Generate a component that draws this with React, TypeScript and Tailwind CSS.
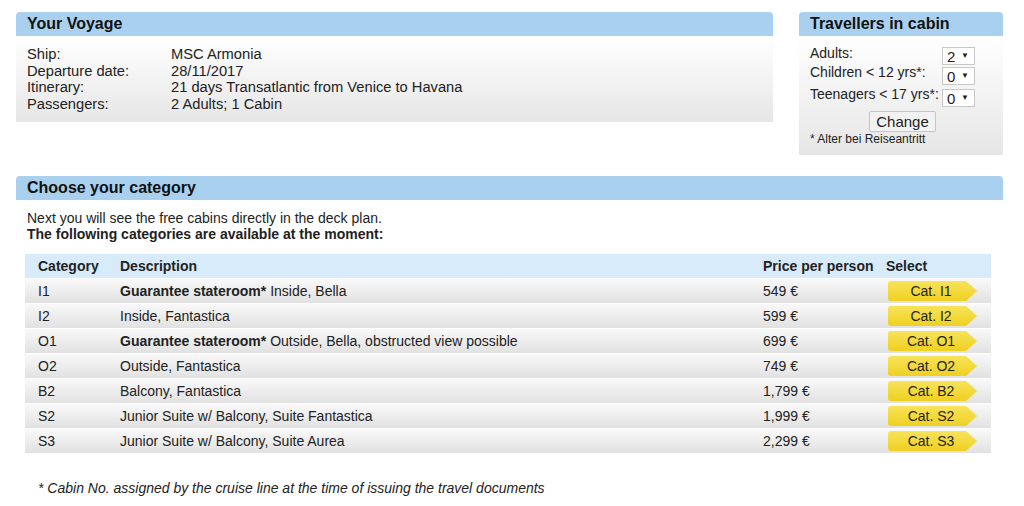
import React from 'react';

const font = "font-['Liberation_Sans',Arial,sans-serif]";

const rows = [
  { cat: 'I1', bold: true, desc: 'Inside, Bella', price: '549 €' },
  { cat: 'I2', bold: false, desc: 'Inside, Fantastica', price: '599 €' },
  { cat: 'O1', bold: true, desc: 'Outside, Bella, obstructed view possible', price: '699 €' },
  { cat: 'O2', bold: false, desc: 'Outside, Fantastica', price: '749 €' },
  { cat: 'B2', bold: false, desc: 'Balcony, Fantastica', price: '1,799 €' },
  { cat: 'S2', bold: false, desc: 'Junior Suite w/ Balcony, Suite Fantastica', price: '1,999 €' },
  { cat: 'S3', bold: false, desc: 'Junior Suite w/ Balcony, Suite Aurea', price: '2,299 €' },
];

function BoxHeader({ title }: { title: string }) {
  return (
    <div className="h-6 bg-[#a9d1ef] rounded-t-[4px] px-[11px] flex items-center">
      <h2 className="text-[16px] font-bold text-[#111] leading-none">{title}</h2>
    </div>
  );
}

function Select({ value }: { value: string }) {
  return (
    <div className="w-[33px] h-[18px] bg-white border border-[#c8c8c8] flex items-center justify-between pl-[4px] pr-[5px] text-[15px] leading-none text-[#222]">
      <span>{value}</span>
      <span className="text-[8px]">▼</span>
    </div>
  );
}

function CatButton({ label }: { label: string }) {
  return (
    <div className="relative w-[89px] h-[20px]">
      <svg className="absolute inset-0" width="89" height="20" viewBox="0 0 89 20">
        <defs>
          <linearGradient id="yel" x1="0" y1="0" x2="0" y2="1">
            <stop offset="0" stopColor="#f7e35a" />
            <stop offset="1" stopColor="#efd021" />
          </linearGradient>
        </defs>
        <path d="M3 0 H78 L89 10 L78 20 H3 Q0 20 0 17 V3 Q0 0 3 0 Z" fill="url(#yel)" />
      </svg>
      <span className="relative flex h-full items-center justify-center pr-[3px] text-[14px] text-[#222] leading-none">
        {label}
      </span>
    </div>
  );
}

export default function App() {
  return (
    <div className={`${font} bg-white w-[1024px] h-[506px] text-[#222] pt-3 pl-4`}>
      {/* top row */}
      <div className="flex items-start gap-[26px]">
        <section className="w-[757px]">
          <BoxHeader title="Your Voyage" />
          <div className="h-[86px] bg-gradient-to-b from-white to-[#e6e6e6] pl-[11px] pt-[10px] text-[14.7px] leading-[16.5px]">
            <div className="grid grid-cols-[144px_1fr]">
              <span>Ship:</span>
              <span>MSC Armonia</span>
              <span>Departure date:</span>
              <span>28/11/2017</span>
              <span>Itinerary:</span>
              <span>21 days Transatlantic from Venice to Havana</span>
              <span>Passengers:</span>
              <span>2 Adults; 1 Cabin</span>
            </div>
          </div>
        </section>

        <section className="w-[204px]">
          <BoxHeader title="Travellers in cabin" />
          <div className="h-[119px] bg-gradient-to-b from-white to-[#e6e6e6] pl-[11px] pr-[28px] pt-[11px] text-[14px]">
            <div className="flex flex-col">
              <div className="flex items-start justify-between">
                <span className="leading-[16px] -mt-[2px]">Adults:</span>
                <Select value="2" />
              </div>
              <div className="flex items-start justify-between mt-[2px]">
                <span className="leading-[16px] -mt-[3px]">Children &lt; 12 yrs*:</span>
                <Select value="0" />
              </div>
              <div className="flex items-start justify-between mt-[4px]">
                <span className="leading-[16px] -mt-[3px]">Teenagers &lt; 17 yrs*:</span>
                <Select value="0" />
              </div>
            </div>
            <div className="flex justify-center pl-[20px] mt-[4px]">
              <button className="h-[21px] px-[6px] bg-[#f2f2f2] border border-[#c6c6c6] rounded-[2px] text-[15px] leading-none text-[#222]">
                Change
              </button>
            </div>
            <p className="text-[12px] leading-[14px]">* Alter bei Reiseantritt</p>
          </div>
        </section>
      </div>

      {/* category */}
      <section className="w-[987px] mt-[21px]">
        <BoxHeader title="Choose your category" />
        <div className="pl-[11px] pt-[10px] text-[14px] leading-[16px]">
          <p>Next you will see the free cabins directly in the deck plan.</p>
          <p className="font-bold">The following categories are available at the moment:</p>
        </div>
        <div className="ml-[9px] w-[966px] mt-[12px] text-[14px]">
          <div className="h-6 bg-[#d8ebfa] flex items-center font-bold">
            <span className="w-[95px] pl-[13px]">Category</span>
            <span className="w-[643px]">Description</span>
            <span className="w-[123px]">Price per person</span>
            <span>Select</span>
          </div>
          {rows.map((r) => (
            <div
              key={r.cat}
              className="h-[24px] mt-[1px] bg-gradient-to-b from-[#f9f9f9] to-[#e1e1e1] flex items-center"
            >
              <span className="w-[95px] pl-[13px]">{r.cat}</span>
              <span className="w-[643px]">
                {r.bold && <b>Guarantee stateroom*</b>}
                {r.bold ? ' ' : ''}
                {r.desc}
              </span>
              <span className="w-[125px]">{r.price}</span>
              <CatButton label={`Cat. ${r.cat}`} />
            </div>
          ))}
        </div>
        <p className="pl-[22px] mt-[25px] text-[14px] italic">
          * Cabin No. assigned by the cruise line at the time of issuing the travel documents
        </p>
      </section>
    </div>
  );
}
